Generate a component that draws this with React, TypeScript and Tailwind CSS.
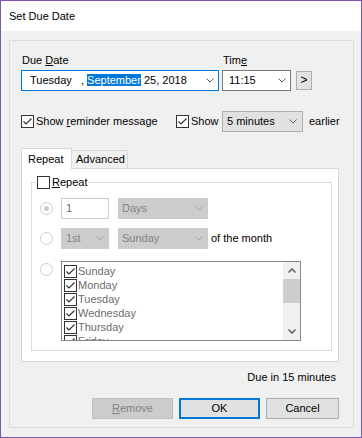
import React from 'react';

const DAYS = ['Sunday', 'Monday', 'Tuesday', 'Wednesday', 'Thursday', 'Friday'];

function Chevron({ color = '#606060' }: { color?: string }) {
  return (
    <svg width="8" height="5" viewBox="0 0 8 5" className="flex-none">
      <path d="M0.5 0.5 L4 4 L7.5 0.5" fill="none" stroke={color} strokeWidth="1" />
    </svg>
  );
}

function CheckBox({ checked }: { checked?: boolean }) {
  return (
    <span className="flex-none w-[13px] h-[13px] border border-[#333333] bg-white flex items-center justify-center">
      {checked && (
        <svg width="11" height="11" viewBox="0 0 11 11">
          <path d="M1.5 5.5 L4 8 L9.5 2.5" fill="none" stroke="#333333" strokeWidth="1.2" />
        </svg>
      )}
    </span>
  );
}

function Radio({ checked }: { checked?: boolean }) {
  return (
    <span className="flex-none w-[13px] h-[13px] rounded-full border border-[#cccccc] bg-white flex items-center justify-center">
      {checked && <span className="w-[5px] h-[5px] rounded-full bg-[#cccccc]" />}
    </span>
  );
}

function DisabledSelect({ value, wide }: { value: string; wide?: boolean }) {
  return (
    <div
      className={`flex-none h-full flex items-center justify-between bg-[#cccccc] border border-[#cccccc] text-[#838383] pr-[4px] ${
        wide ? 'w-[90px] pl-[3px]' : 'w-[48px] pl-[4px]'
      }`}
    >
      <span>{value}</span>
      <Chevron color="#a6a6a6" />
    </div>
  );
}

export default function App() {
  return (
    <div className="w-[362px] h-[438px] flex flex-col border border-[#7f54b3] font-['Liberation_Sans',Arial,sans-serif] text-[11px] leading-[15px] text-black select-none">
      {/* Title bar */}
      <div className="h-[30px] flex-none flex items-center pl-[8px] bg-white text-[11px]">Set Due Date</div>

      {/* Body */}
      <div className="flex-1 flex flex-col bg-[#f0f0f0] pt-[9px] pl-[8px] pr-[7px] pb-[9px]">
        <div className="flex-1 flex flex-col border border-[#dcdcdc] pl-[11px] pr-[14px] pt-[12px]">
          {/* Date / time */}
          <div className="flex">
            <div className="w-[198px] flex flex-col">
              <div className="h-[15px] pl-[1px]">
                Due <span className="underline">D</span>ate
              </div>
              <div className="mt-[2px] h-[21px] flex items-center justify-between bg-white border border-[#0078d7] pl-[8px] pr-[4px]">
                <span className="whitespace-pre">
                  {'Tuesday   , '}
                  <span className="bg-[#0078d7] text-white">September</span>
                  {' 25, 2018'}
                </span>
                <Chevron />
              </div>
            </div>
            <div className="ml-[3px] w-[69px] flex flex-col">
              <div className="h-[15px] pl-[1px]">
                Tim<span className="underline">e</span>
              </div>
              <div className="mt-[2px] h-[21px] flex items-center justify-between bg-white border border-[#7a7a7a] pl-[6px] pr-[4px]">
                <span>11:15</span>
                <Chevron />
              </div>
            </div>
            <div className="ml-[5px] self-end mb-[1px] w-[16px] h-[19px] flex items-center justify-center bg-[#e1e1e1] border border-[#adadad] text-[12px]">
              &gt;
            </div>
          </div>

          {/* Reminder */}
          <div className="mt-[20px] h-[21px] flex items-center">
            <div className="w-[155px] flex-none flex items-center gap-[2px]">
              <CheckBox checked />
              <span>
                Show <span className="underline">r</span>eminder message
              </span>
            </div>
            <div className="w-[46px] flex-none flex items-center gap-[2px]">
              <CheckBox checked />
              <span>Show</span>
            </div>
            <div className="w-[81px] h-full flex-none flex items-center justify-between bg-[#e1e1e1] border border-[#adadad] pl-[4px] pr-[5px]">
              <span>5 minutes</span>
              <Chevron />
            </div>
            <span className="ml-[6px]">earlier</span>
          </div>

          {/* Tabs */}
          <div className="mt-[16px] h-[20px] flex items-end">
            <div className="relative z-10 w-[51px] h-[21px] -mb-px flex items-center pl-[6px] bg-white border border-b-0 border-[#d9d9d9]">
              Repeat
            </div>
            <div className="-ml-px w-[57px] h-[18px] flex items-center pl-[4px] bg-[#f0f0f0] border border-b-0 border-[#d9d9d9]">
              Advanced
            </div>
          </div>
          <div className="w-[318px] h-[194px] flex-none bg-white border border-[#d9d9d9]">
            <fieldset className="ml-[9px] mt-[6px] w-[301px] h-[176px] border border-[#dcdcdc]">
              <legend className="ml-[4px] px-[1px]">
                <span className="flex items-center gap-[2px]">
                  <CheckBox />
                  <span>
                    <span className="underline">R</span>epeat
                  </span>
                </span>
              </legend>

              <div className="pl-[8px]">
                <div className="mt-[8px] h-[21px] flex items-center">
                  <Radio checked />
                  <div className="ml-[8px] w-[48px] h-full flex-none flex items-center bg-white border border-[#cccccc] pl-[4px] text-[#6d6d6d]">
                    1
                  </div>
                  <div className="ml-[9px] h-full">
                    <DisabledSelect value="Days" wide />
                  </div>
                </div>

                <div className="mt-[9px] h-[21px] flex items-center">
                  <Radio />
                  <div className="ml-[8px] h-full">
                    <DisabledSelect value="1st" />
                  </div>
                  <div className="ml-[9px] h-full">
                    <DisabledSelect value="Sunday" wide />
                  </div>
                  <span className="ml-[3px]">of the month</span>
                </div>

                <div className="mt-[12px] flex items-start">
                  <div className="mt-[2px]">
                    <Radio />
                  </div>
                  <div className="ml-[8px] w-[240px] h-[80px] flex bg-white border border-[#828790]">
                    <div className="flex-1 overflow-hidden pt-[2px] pl-[2px]">
                      {DAYS.map(d => (
                        <div key={d} className="h-[14px] flex items-center gap-[1px] text-[#6d6d6d]">
                          <CheckBox checked />
                          <span>{d}</span>
                        </div>
                      ))}
                    </div>
                    <div className="w-[17px] flex-none flex flex-col bg-[#f0f0f0]">
                      <div className="h-[17px] flex items-center justify-center">
                        <svg width="8" height="5" viewBox="0 0 8 5">
                          <path d="M0.5 4.5 L4 1 L7.5 4.5" fill="none" stroke="#606060" strokeWidth="1.5" />
                        </svg>
                      </div>
                      <div className="h-[24px] bg-[#cdcdcd]" />
                      <div className="flex-1" />
                      <div className="h-[17px] flex items-center justify-center">
                        <svg width="8" height="5" viewBox="0 0 8 5">
                          <path d="M0.5 0.5 L4 4 L7.5 0.5" fill="none" stroke="#606060" strokeWidth="1.5" />
                        </svg>
                      </div>
                    </div>
                  </div>
                </div>
              </div>
            </fieldset>
          </div>

          {/* Status */}
          <div className="mt-[8px] h-[15px] text-right pr-[3px]">Due in 15 minutes</div>

          {/* Buttons */}
          <div className="mt-[13px] flex justify-end gap-[6px]">
            <div className="w-[81px] h-[21px] flex items-center justify-center bg-[#cccccc] border border-[#bfbfbf] text-[#838383]">
              <span>
                <span className="underline">R</span>emove
              </span>
            </div>
            <div className="w-[81px] h-[21px] flex items-center justify-center bg-[#e1e1e1] border-2 border-[#0078d7]">OK</div>
            <div className="w-[73px] h-[21px] flex items-center justify-center bg-[#e1e1e1] border border-[#adadad]">Cancel</div>
          </div>
        </div>
      </div>
    </div>
  );
}
